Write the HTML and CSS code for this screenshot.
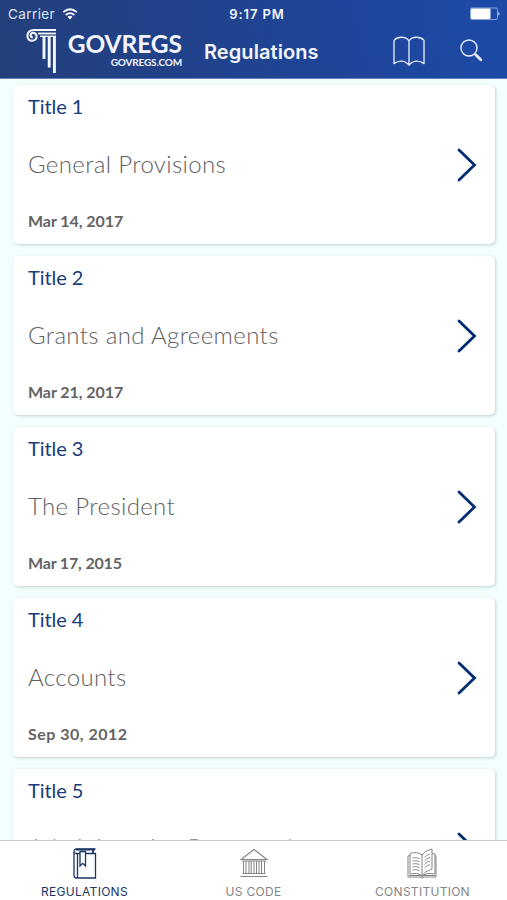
FILE: index.html
```html
<!DOCTYPE html>
<html lang="en">
<head>
<meta charset="utf-8">
<title>GovRegs</title>
<link rel="stylesheet" href="styles.css">
</head>
<body>
<div class="app">
  <header class="header">
    <div class="status">
      <div class="carrier"><span>Carrier</span>
        <svg width="16" height="12" viewBox="0 0 16 12" fill="none" stroke="#fff" stroke-width="1.700"><path d="M1.2 4.1Q8-1.6 14.8 4.1M3.7 7Q8 3.4 12.3 7"/><path d="M5.6 8.8Q8 6.8 10.4 8.8L8 11.4z" fill="#fff" stroke="none"/></svg>
      </div>
      <span class="time">9:17 PM</span>
      <svg class="battery" width="31" height="14" viewBox="0 0 31 14"><rect x=".5" y="1" width="27" height="11.5" rx="1.5" fill="none" stroke="#8ba4d8"/><rect x="1" y="1.5" width="19.5" height="10.5" rx="1" fill="#fff"/><path d="M28.5 4.8Q30.5 6.7 28.5 8.7z" fill="#fff"/></svg>
    </div>
    <div class="nav">
      <svg class="column" width="32" height="46" viewBox="0 0 32 46" fill="none" stroke="#f5f7ff"><path d="M30 2H8C3.5 2 1.4 4.5 1.4 7.800c0 3 2 5 4.700 5s4.500-1.800 4.500-4.200-1.600-3.700-3.400-3.700-2.600 1.200-2.600 2.500 1 2 2.200 1.700" stroke-width="2.100"/><path d="M12 5.500h18" stroke-width="1.800"/><path d="M14 8.300h16" stroke-width="1.400"/><path d="M18 9v22M23.200 9v30.500M28.400 9v36" stroke-width="2.900"/></svg>
      <div class="logo"><span class="brand">GOVREGS</span><span class="domain">GOVREGS.COM</span></div>
      <h1>Regulations</h1>
      <svg class="book" width="32" height="31" viewBox="0 0 33 32" fill="none" stroke="#e5ecff" stroke-width="1.4" stroke-linejoin="round"><path d="M16.5 5C13 .2 5 .2 1 4.500v24c4.500-3.500 11-4 15.500 1.500 4.500-5.500 11-5 15.500-1.500v-24C28 .2 20 .2 16.500 5v25"/></svg>
      <svg class="search" width="23" height="24" viewBox="0 0 23 24" fill="none" stroke="#e9efff"><circle cx="9" cy="9" r="8" stroke-width="1.4"/><path d="M14.700 14.700l2 2" stroke-width="1.500"/><path d="M16 16l4.800 4.700" stroke-width="2.800" stroke-linecap="round"/></svg>
    </div>
  </header>
  <main class="list">
    <article class="card"><h2>Title 1</h2><p class="name">General Provisions</p><p class="date">Mar 14, 2017</p><svg class="chevron" viewBox="0 0 20 34"><path d="M2 2l15.500 15L2 32"/></svg></article>
    <article class="card"><h2>Title 2</h2><p class="name">Grants and Agreements</p><p class="date">Mar 21, 2017</p><svg class="chevron" viewBox="0 0 20 34"><path d="M2 2l15.500 15L2 32"/></svg></article>
    <article class="card"><h2>Title 3</h2><p class="name">The President</p><p class="date tight">Mar 17, 2015</p><svg class="chevron" viewBox="0 0 20 34"><path d="M2 2l15.500 15L2 32"/></svg></article>
    <article class="card"><h2>Title 4</h2><p class="name">Accounts</p><p class="date wide">Sep 30, 2012</p><svg class="chevron" viewBox="0 0 20 34"><path d="M2 2l15.500 15L2 32"/></svg></article>
    <article class="card"><h2>Title 5</h2><p class="name">Administrative Personnel</p><svg class="chevron" viewBox="0 0 20 34"><path d="M2 2l15.500 15L2 32"/></svg></article>
  </main>
  <nav class="tabs">
    <div class="tab active">
      <svg width="24" height="31" viewBox="0 0 24 31" fill="none" stroke="currentColor" stroke-width="1.300"><path d="M22.500 1H3.500Q1 1 1 3.500v23.800Q1 30 3.500 30h19V5.500h-19Q1 5.500 1 3.200M4.500 5.500V30"/><path d="M3 1.700h19M20 1v4" stroke-width="1.800"/><path d="M7 3.500h5.500v14.500l-2.800-2.700L7 18z" fill="#fff"/></svg>
      <span>REGULATIONS</span>
    </div>
    <div class="tab">
      <svg width="28" height="31" viewBox="0 0 28 31" fill="none" stroke="currentColor" stroke-width="1"><path d="M14 1.500L1 11.500h26zM2 13h24M2.500 25.500h23M.500 28.500h27" stroke-width="1.100"/><path d="M3.500 13v12M6 13v12M9 13v12M11.200 13v12M14 13v12M16.500 13v12M19 13v12M21.500 13v12M24.500 13v12"/></svg>
      <span>US CODE</span>
    </div>
    <div class="tab">
      <svg width="31" height="31" viewBox="0 0 31 31" fill="none" stroke="currentColor" stroke-width="1"><path d="M15 7Q10 3 3 5.500V26Q10 24 15 27.500zM15 7Q18 2.500 25 1V21Q18 23 15 27.500M25 5.500l3 .5v20q-7-2-13 1.500M3 7L1 8v21h12l2 1 2-1h12V8l-1-1M2 27.500h11l2 1 2-1h11"/><path stroke-width=".9" d="M5.500 10q3.500-1 7 .5M5.500 13q3.500-1 7 .5M5.500 16q3.500-1 7 .5M5.500 19q3.500-1 7 .5M5.500 22q3.500-1 7 .5M17.500 9.500q2-2.500 5.500-3.500M17.500 13q2-2.500 5.500-3.500M17.500 16.500q2-2.500 5.500-3.500M17.500 20q2-2.500 5.500-3.500"/></svg>
      <span>CONSTITUTION</span>
    </div>
  </nav>
</div>
</body>
</html>
```
FILE: styles.css
```css
* { box-sizing: border-box; }
body { margin: 0; font-family: Inter, sans-serif; }
h1, h2, p { margin: 0; }
svg { display: block; flex: none; }
.app { width: 507px; height: 900px; overflow: hidden; display: flex; flex-direction: column; background: #f3fefe; }
.header { height: 79px; flex: none; background: linear-gradient(75deg, #233f7b, #1f4496 60%, #1d4aa8); color: #f3f6ff; border-bottom: 1px solid #6484b5; }
.status { display: grid; grid-template-columns: 1fr auto 1fr; align-items: center; height: 27px; padding: 0 6px 0 8px; font-size: 13.500px; }
.carrier { display: flex; align-items: center; gap: 7px; color: #dce4f5; letter-spacing: .4px; }
.time { font-weight: 600; font-size: 13px; letter-spacing: .9px; margin-left: 5px; }
.battery { justify-self: end; }
.nav { display: flex; height: 51px; padding-left: 26px; }
.column { margin-top: 1px; }
.logo { display: flex; flex-direction: column; width: 114px; margin-left: 10px; padding-top: 5px; align-items: flex-end; font-family: Lato, sans-serif; white-space: nowrap; }
.brand { font-size: 24.500px; line-height: 24px; font-weight: 700; letter-spacing: -.05px; }
.domain { font-size: 10px; line-height: 12px; font-weight: 700; letter-spacing: -.15px; }
h1 { margin-left: 22px; width: 189px; padding-top: 13px; line-height: 24px; font-size: 20px; font-weight: 600; letter-spacing: .08px; }
.book { margin-top: 9px; }
.search { margin-top: 12px; margin-left: 35px; }
.list { height: 761px; flex: none; overflow: hidden; padding: 6px 12px 0 13px; display: flex; flex-direction: column; gap: 12px; }
.card { position: relative; flex: none; height: 159px; padding: 9px 15px; border-radius: 5px; background: #fff; box-shadow: 1px 1px 3px rgba(70, 100, 100, .3); font-family: Lato, sans-serif; display: flex; flex-direction: column; }
.card h2 { color: #173c78; font-size: 20px; line-height: 24px; font-weight: 400; letter-spacing: -.05px; }
.name { color: #606060; font-size: 24px; line-height: 30px; margin-top: 31px; font-weight: 300; letter-spacing: .36px; }
.card:last-child .name { margin-top: 30px; color: #909090; }
.date { color: #636363; font-size: 16px; line-height: 20px; margin-top: 32px; font-weight: 700; letter-spacing: -.05px; }
.tight { letter-spacing: -.17px; }
.wide { letter-spacing: .5px; }
.chevron { position: absolute; right: 18px; top: 63px; width: 20px; height: 34px; fill: none; stroke: #002c70; stroke-width: 2.800; stroke-linecap: round; }
.tabs { height: 60px; flex: none; display: grid; grid-template-columns: repeat(3, 1fr); border-top: 1px solid #c9c9c9; background: #fff; }
.tab { display: flex; flex-direction: column; align-items: center; padding-top: 7px; color: #858585; font-size: 12px; line-height: 16px; letter-spacing: .28px; }
.tab span { margin-top: 5px; }
.active { color: #193568; }
```
